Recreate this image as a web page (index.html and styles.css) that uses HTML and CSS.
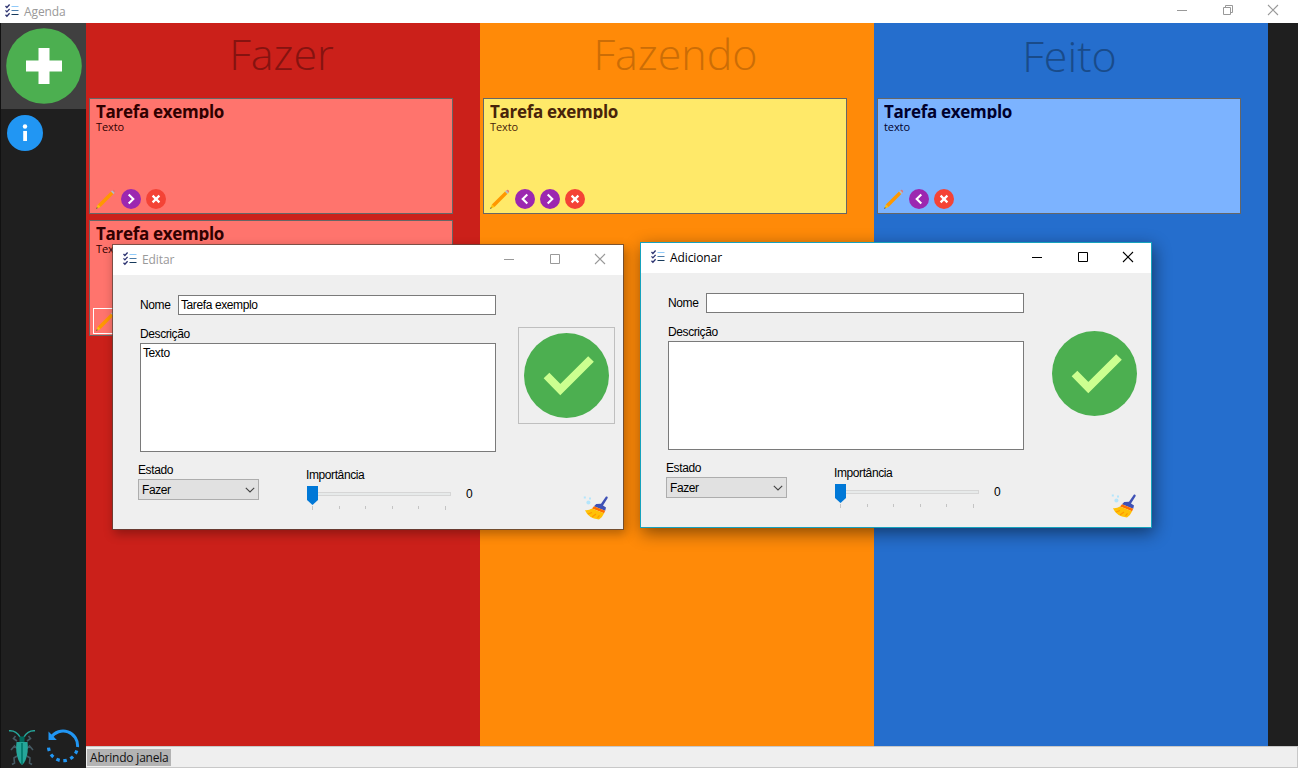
FILE: index.html
```html
<!DOCTYPE html>
<html lang="pt-BR">
<head>
<meta charset="utf-8">
<title>Agenda</title>
<link rel="stylesheet" href="styles.css">
</head>
<body>
<svg class="defs" width="0" height="0">
  <symbol id="i-list" viewBox="0 0 14 14">
    <path d="M.5 2l1.4 1.5L4.6.5M.5 6.4l1.4 1.5 2.7-3M.5 10.800l1.4 1.500 2.700-3" fill="none" stroke="#2b3270" stroke-width="1.300"/>
    <path d="M6.500 2.500H13.500" stroke="#90caf9"/><path d="M6.500 6.500H13.500" stroke="#4a7ba8"/><path d="M6.500 10.500H13.500" stroke="#173a5c"/>
  </symbol>
  <symbol id="i-min" viewBox="0 0 12 12"><path d="M1 6.500H11" stroke="currentColor"/></symbol>
  <symbol id="i-max" viewBox="0 0 12 12"><path d="M1.500 1.500h9v9h-9z" fill="none" stroke="currentColor"/></symbol>
  <symbol id="i-restore" viewBox="0 0 12 12"><path d="M1.500 3.500h7v7h-7zM3.500 3V1.500h7v7H9" fill="none" stroke="currentColor"/></symbol>
  <symbol id="i-close" viewBox="0 0 12 12"><path d="M1 1l10 10M11 1L1 11" stroke="currentColor" stroke-width="1.100"/></symbol>
  <symbol id="i-plus" viewBox="0 0 76 76"><circle cx="38" cy="38" r="37.800" fill="#4caf50"/><path d="M32.500 20h11v12.500H56v11H43.500V56h-11V43.500H20v-11h12.500z" fill="#fff"/></symbol>
  <symbol id="i-info" viewBox="0 0 36 36"><circle cx="18" cy="18" r="18" fill="#2196f3"/><circle cx="18" cy="11.500" r="2.200" fill="#fff"/><path d="M16.200 16h3.800v10h-3.800z" fill="#fff"/></symbol>
  <symbol id="i-pencil" viewBox="0 0 20 20">
    <path d="M15 2.600L17.400 5 4.500 18 1.900 15.400z" fill="#ff9800"/>
    <path d="M15 2.600l1.300-1.300 2.500 2.500L17.400 5z" fill="#b0bec5"/><path d="M16.300 1.300q1-1 2-.2t.8 2l-.4.700z" fill="#e57373"/>
    <path d="M1.900 15.400l2.600 2.600L.3 19.700z" fill="#ffc107"/><path d="M.9 18.200l.9.900-1.800.9z" fill="#37474f"/>
  </symbol>
  <symbol id="i-next" viewBox="0 0 20 20"><circle cx="10" cy="10" r="10" fill="#9c27b0"/><path d="M7.700 5.400l4.600 4.600-4.600 4.600" fill="none" stroke="#fff" stroke-width="2.100"/></symbol>
  <symbol id="i-prev" viewBox="0 0 20 20"><circle cx="10" cy="10" r="10" fill="#9c27b0"/><path d="M12.300 5.400L7.700 10l4.600 4.600" fill="none" stroke="#fff" stroke-width="2.100"/></symbol>
  <symbol id="i-del" viewBox="0 0 20 20"><circle cx="10" cy="10" r="10" fill="#f44336"/><path d="M6.600 6.600l6.800 6.800M13.400 6.600l-6.800 6.800" stroke="#fff" stroke-width="2.200"/></symbol>
  <symbol id="i-check" viewBox="0 0 85 85"><circle cx="42.500" cy="42.500" r="42.500" fill="#4caf50"/><path d="M22.500 42.500L36.300 56.500 67 26" fill="none" stroke="#ccff90" stroke-width="8"/></symbol>
  <symbol id="i-broom" viewBox="0 0 26 26">
    <path d="M23 1.500q2-.5 1.700 1.500L20 10.500l3 2-.8 3.300-11.200-4.600 2.200-2.300 4.800-.2z" fill="#3f51b5"/>
    <path d="M11 11.200l11.200 4.600-1.100 2.400L9 13.500z" fill="#ff6f00"/>
    <path d="M9 13.500l12.100 4.700Q19 23 16 24.600 5 23 2 15.200q4 .4 7-1.700z" fill="#ffc107"/>
    <path d="M5 19l4-1.500M9 22l4-3M14.500 22.800l2-2.500" stroke="#ff9800" stroke-width="1.100"/>
    <path d="M.8 1.500h2v2h-2zM6 2.500h2v2H6z" fill="#b3e5fc"/><circle cx="5.400" cy="7.500" r="2" fill="#b3e5fc"/>
  </symbol>
  <symbol id="i-bug" viewBox="0 0 28 38">
    <path d="M9 12L5.500 9.500 7.500 7M19 12l3.500-2.500L20.500 7M9 19.500L6.500 17 3 21M19 19.500l2.500-2.500 3.500 4M9 27l-3 2 .5 5-2.500 1.500M19 27l3 2-.5 5 2.500 1.500" fill="none" stroke="#455a64" stroke-width="1.600"/>
    <path d="M12 8Q8 1 1 1.700M16 8Q20 1 27 1.700" fill="none" stroke="#26a69a" stroke-width="1.500"/>
    <path d="M11.500 7.500h5v6h-5z" fill="#00695c"/>
    <path d="M8.500 13h11q1.500 13-3.500 21l-2 2-2-2Q7 26 8.500 13z" fill="#26a69a"/><path d="M13.200 14h1.600v21h-1.600z" fill="#00796b"/>
  </symbol>
  <symbol id="i-reload" viewBox="0 0 34 34">
    <path d="M5 8.500A14.500 14.500 0 0 1 31.500 18" fill="none" stroke="#2196f3" stroke-width="3"/>
    <path d="M2.500 2.500V11h8.300z" fill="#2196f3"/>
    <path d="M30.800 21.500A14.500 14.500 0 0 1 2.500 16" fill="none" stroke="#2196f3" stroke-width="3.200" stroke-dasharray="3.500 3.700"/>
  </symbol>
  <symbol id="i-thumb" viewBox="0 0 11 19"><path d="M0 0h11v14l-5.500 5L0 14z" fill="#0078d7"/></symbol>
  <symbol id="i-down" viewBox="0 0 10 6"><path d="M.8.800L5 5 9.200.800" fill="none" stroke="#444" stroke-width="1.100"/></symbol>
</svg>

<div class="app">
  <header class="titlebar">
    <svg class="list-icon"><use href="#i-list"/></svg>
    <span class="win-title">Agenda</span>
    <div class="controls"><svg><use href="#i-min"/></svg><svg><use href="#i-restore"/></svg><svg><use href="#i-close"/></svg></div>
  </header>
  <div class="workspace">
    <aside class="sidebar">
      <div class="add"><svg><use href="#i-plus"/></svg></div>
      <svg class="info"><use href="#i-info"/></svg>
      <div class="tools"><svg class="bug"><use href="#i-bug"/></svg><svg class="reload"><use href="#i-reload"/></svg></div>
    </aside>
    <main class="main">
      <div class="board">
        <section class="column todo">
          <h1><span>Fazer</span></h1>
          <article class="card"><h2>Tarefa exemplo</h2><p>Texto</p>
            <div class="actions"><svg><use href="#i-pencil"/></svg><svg><use href="#i-next"/></svg><svg><use href="#i-del"/></svg></div></article>
          <article class="card"><h2>Tarefa exemplo</h2><p>Texto</p>
            <div class="actions"><svg class="focused"><use href="#i-pencil"/></svg><svg><use href="#i-next"/></svg><svg><use href="#i-del"/></svg></div></article>
        </section>
        <section class="column doing">
          <h1><span>Fazendo</span></h1>
          <article class="card"><h2>Tarefa exemplo</h2><p>Texto</p>
            <div class="actions"><svg><use href="#i-pencil"/></svg><svg><use href="#i-prev"/></svg><svg><use href="#i-next"/></svg><svg><use href="#i-del"/></svg></div></article>
        </section>
        <section class="column done">
          <h1><span>Feito</span></h1>
          <article class="card"><h2>Tarefa exemplo</h2><p>texto</p>
            <div class="actions"><svg><use href="#i-pencil"/></svg><svg><use href="#i-prev"/></svg><svg><use href="#i-del"/></svg></div></article>
        </section>
      </div>
      <footer class="status"><span>Abrindo janela</span></footer>
    </main>
  </div>
</div>

<div class="dialog edit">
  <header class="dialog-bar">
    <svg class="list-icon"><use href="#i-list"/></svg><span class="win-title">Editar</span>
    <div class="controls"><svg><use href="#i-min"/></svg><svg><use href="#i-max"/></svg><svg><use href="#i-close"/></svg></div>
  </header>
  <div class="dialog-body">
    <div class="form">
      <div class="name-row"><span class="label">Nome</span><div class="input">Tarefa exemplo</div></div>
      <div class="label desc">Descrição</div>
      <div class="textarea">Texto</div>
      <div class="bottom">
        <div class="state"><div class="label">Estado</div><div class="select">Fazer<svg><use href="#i-down"/></svg></div></div>
        <div class="importance"><div class="label">Importância</div>
          <div class="slider"><div class="track"></div><svg class="thumb"><use href="#i-thumb"/></svg><div class="ticks"><i></i><i></i><i></i><i></i><i></i><i></i></div></div></div>
        <span class="label value">0</span>
      </div>
    </div>
    <div class="side"><div class="confirm"><svg><use href="#i-check"/></svg></div><svg class="broom"><use href="#i-broom"/></svg></div>
  </div>
</div>

<div class="dialog create">
  <header class="dialog-bar">
    <svg class="list-icon"><use href="#i-list"/></svg><span class="win-title">Adicionar</span>
    <div class="controls"><svg><use href="#i-min"/></svg><svg><use href="#i-max"/></svg><svg><use href="#i-close"/></svg></div>
  </header>
  <div class="dialog-body">
    <div class="form">
      <div class="name-row"><span class="label">Nome</span><div class="input"></div></div>
      <div class="label desc">Descrição</div>
      <div class="textarea"></div>
      <div class="bottom">
        <div class="state"><div class="label">Estado</div><div class="select">Fazer<svg><use href="#i-down"/></svg></div></div>
        <div class="importance"><div class="label">Importância</div>
          <div class="slider"><div class="track"></div><svg class="thumb"><use href="#i-thumb"/></svg><div class="ticks"><i></i><i></i><i></i><i></i><i></i><i></i></div></div></div>
        <span class="label value">0</span>
      </div>
    </div>
    <div class="side"><div class="confirm"><svg><use href="#i-check"/></svg></div><svg class="broom"><use href="#i-broom"/></svg></div>
  </div>
</div>
</body>
</html>
```

FILE: styles.css
```css
* { box-sizing: border-box; margin: 0; padding: 0; }
body { width: 1298px; height: 768px; overflow: hidden; position: relative; font-family: "Open Sans", sans-serif; font-size: 12px; background: #1f1f1f; }
svg { display: block; flex: none; }
.defs { position: absolute; }
.app { height: 768px; display: flex; flex-direction: column; }

.titlebar, .dialog-bar { display: flex; background: #fff; color: #999; }
.titlebar { height: 23px; padding-left: 5px; }
.list-icon { width: 14px; height: 14px; margin-top: 4px; }
.win-title { margin-left: 5px; line-height: 23px; letter-spacing: -0.1px; }
.controls { margin-left: auto; display: flex; gap: 33.500px; }
.controls svg { width: 12px; height: 12px; }
.titlebar .controls { padding: 4px 19px 0 0; }

.workspace { flex: 1; display: flex; min-height: 0; }
.sidebar { width: 86px; border-left: 1px solid #111; background: #1f1f1f; display: flex; flex-direction: column; }
.add { height: 86px; background: #404040; padding: 5px; }
.add svg { width: 76px; height: 76px; }
.info { width: 36px; height: 36px; margin: 6px 0 0 6px; }
.tools { margin-top: auto; display: flex; padding: 0 5px 1px 7px; gap: 10px; }
.bug { width: 28px; height: 38px; }
.reload { width: 34px; height: 34px; }
.main { flex: 1; display: flex; flex-direction: column; }
.board { flex: 1; display: grid; grid-template-columns: repeat(3, 394px); }
.column { padding: 0 27px 0 3px; }
.column h1 { height: 75px; padding-left: 21px; text-align: center; font-weight: 300; font-size: 43px; line-height: 62px; white-space: nowrap; }
.todo { background: #cb201a; }
.doing { background: #ff8a08; }
.done { background: #256ecd; }
.todo h1 { color: #851310; }
.doing h1 { color: #cb6d06; }
.done h1 { color: #194b8a; line-height: 65px; }
.card { height: 116px; margin-bottom: 6px; border: 1px solid #666; padding: 4px 6px; display: flex; flex-direction: column; }
.todo .card { background: #ff746d; color: #300000; }
.doing .card { background: #ffe969; color: #48240a; }
.done .card { background: #7cb3ff; color: #00002c; }
.card h2 { font-size: 17px; font-weight: 700; line-height: 18px; height: 16px; overflow: hidden; letter-spacing: -0.3px; }
.card p { font-size: 11px; line-height: 16px; letter-spacing: -0.1px; }
.actions { display: flex; gap: 5px; margin-top: auto; }
.actions svg { width: 20px; height: 20px; }
.actions .focused { outline: 1px solid #fff; outline-offset: 2px; }
.status { height: 22px; background: #efefef; border: 1px solid #c8c8c8; border-left: 0; padding: 2px 0 0 1px; color: #111; }
.status span { display: block; width: 84px; height: 17px; line-height: 17px; padding-left: 3px; background: #b3b3b3; white-space: nowrap; letter-spacing: -0.2px; }

.dialog { position: absolute; width: 512px; height: 286px; background: #efefef; border: 1px solid #777; display: flex; flex-direction: column; }
.edit { left: 112px; top: 244px; border-color: rgba(90, 70, 60, .75); background-clip: padding-box; box-shadow: 2px 4px 10px rgba(0, 0, 0, .3); }
.create { left: 640px; top: 242px; border-color: #16a2bd; box-shadow: 2px 5px 16px rgba(0, 0, 0, .48); }
.dialog-bar { height: 30px; padding-left: 10px; }
.dialog-bar .list-icon { margin-top: 7px; }
.dialog-bar .win-title { line-height: 30px; }
.create .dialog-bar { color: #000; }
.dialog-bar .controls { padding: 8px 17px 0 0; }
.dialog-body { flex: 1; display: flex; padding: 20px 8px 0 25px; font-family: "Liberation Sans", Arial, sans-serif; font-size: 12px; letter-spacing: -0.4px; color: #000; }
.label { line-height: 14px; white-space: nowrap; }
.form { width: 358px; padding-left: 2px; }
.name-row { display: flex; align-items: center; }
.name-row .label { width: 38px; }
.input { flex: 1; height: 20px; border: 1px solid #7a7a7a; background: #fff; padding-left: 2px; line-height: 19px; }
.desc { margin: 12px 0 2px; }
.textarea { height: 109px; border: 1px solid #7a7a7a; background: #fff; padding: 2px; line-height: 15px; }
.bottom { display: flex; margin-left: -2px; padding-top: 11px; }
.state { width: 121px; }
.select { height: 21px; margin-top: 2px; border: 1px solid #adadad; background: #e1e1e1; display: flex; align-items: center; justify-content: space-between; padding: 0 3px; }
.select svg { width: 10px; height: 6px; }
.importance { width: 145px; margin: 5px 0 0 47px; }
.slider { display: grid; padding-top: 4px; }
.track { grid-area: 1 / 1; height: 4px; margin: 6px 0 0 1px; border: 1px solid #d6d6d6; background: #e7eaea; }
.thumb { grid-area: 1 / 1; width: 11px; height: 19px; margin-left: 1px; }
.ticks { display: flex; justify-content: space-between; padding: 1px 5px 0 6px; }
.ticks i { width: 1px; height: 3px; background: #c4c4c4; }
.ticks i:first-child, .ticks i:last-child { height: 4px; }
.value { margin: 24px 0 0 15px; }
.side { margin: 32px 0 0 auto; width: 97px; display: flex; flex-direction: column; }
.confirm { height: 97px; border: 1px solid transparent; padding: 5px; }
.edit .confirm { border-color: #bfbfbf; }
.confirm svg { width: 85px; height: 85px; }
.broom { width: 26px; height: 26px; margin: 71px 0 0 65px; }
```
